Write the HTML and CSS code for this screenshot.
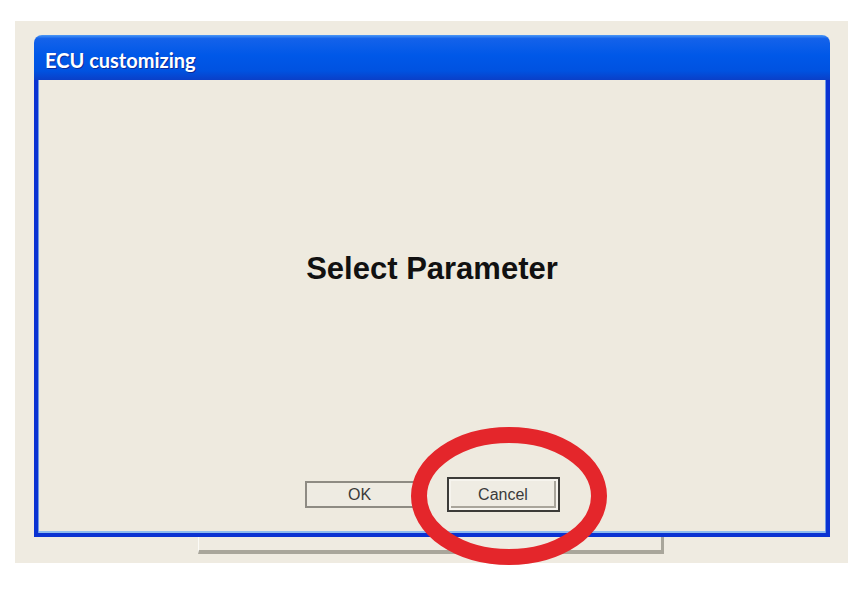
FILE: index.html
```html
<!DOCTYPE html>
<html>
  <head>
    <title>ECU customizing</title>
    <link rel="stylesheet" href="styles.css">
  </head>
  <body>
    <div class="page">
      <div class="backdrop">
        <div class="window">
          <div class="title-bar">ECU customizing</div>
          <div class="client">
            <h1 class="prompt">Select Parameter</h1>
            <div class="buttons">
              <button class="btn">OK</button>
              <button class="btn btn-default">Cancel</button>
            </div>
          </div>
        </div>
        <div class="behind"></div>
      </div>

      <!-- hand drawn highlight over the Cancel button -->
      <svg class="highlight" width="220" height="160" viewBox="0 0 220 160">
        <ellipse cx="109" cy="79" rx="90" ry="61" fill="none" stroke="#e4262b" stroke-width="16"></ellipse>
      </svg>
    </div>
  </body>
</html>
```

FILE: styles.css
```css
body {
  margin: 0;
  background-color: #ffffff;
  font-family: "Liberation Sans", Arial, sans-serif;
}
.page {
  position: relative;
  width: 860px;
  height: 601px;
  padding-top: 21px;
  padding-left: 15px;
  box-sizing: border-box;
}
.backdrop {
  width: 833px;
  height: 542px;
  padding: 14px 0 0 19px;
  box-sizing: border-box;
  background-color: #efebe1;
}
.window {
  width: 796px;
  height: 502px;
  display: flex;
  flex-direction: column;
}
.title-bar {
  height: 42px;
  padding: 3px 11px 0;
  line-height: 45px;
  border-radius: 8px 8px 0 0;
  background: linear-gradient(to bottom, #4c98f6 0, #1462ea 8%, #0058e8 45%, #0052e0 80%, #0a3fc8 100%);
  color: #ffffff;
  font-family: Lato, "Open Sans", sans-serif;
  font-weight: 700;
  font-size: 20px;
  text-shadow: 1px 1px 0 #0b2a9a;
}
.client {
  flex: 1;
  display: flex;
  flex-direction: column;
  align-items: center;
  border: 4px solid #0a32d2;
  border-top: none;
  box-shadow: inset 1px 0 0 #6e9be6, inset -1px 0 0 #6e9be6, inset 0 -2px 0 #8dbbf0;
  background-color: #eeeadf;
  padding-bottom: 21px;
}
.prompt {
  margin: 171px 0 0;
  font-size: 31px;
  line-height: 36px;
  font-weight: 700;
  color: #111111;
}
.buttons {
  margin-top: auto;
  display: flex;
  align-items: center;
  gap: 32px;
}
.btn {
  width: 110px;
  height: 27px;
  padding: 0;
  border: 2px solid #8e8b83;
  border-right-color: #9b988f;
  background-color: #eeebe2;
  font-family: "Liberation Sans", Arial, sans-serif;
  font-size: 16px;
  color: #3a3a3a;
}
.btn-default {
  width: 113px;
  height: 35px;
  border: 2px solid #3c3b38;
  box-shadow: inset 0 0 0 2px #f6f4ee, inset -1px -1px 0 3px #a9a59b;
  background-color: #efece3;
}
.behind {
  width: 462px;
  height: 13px;
  margin-left: 164px;
  border-left: 1px solid #fbfaf6;
  border-right: 3px solid #a9a69b;
  border-bottom: 4px solid #a9a69b;
}
.highlight {
  position: absolute;
  left: 400px;
  top: 417px;
}
```
